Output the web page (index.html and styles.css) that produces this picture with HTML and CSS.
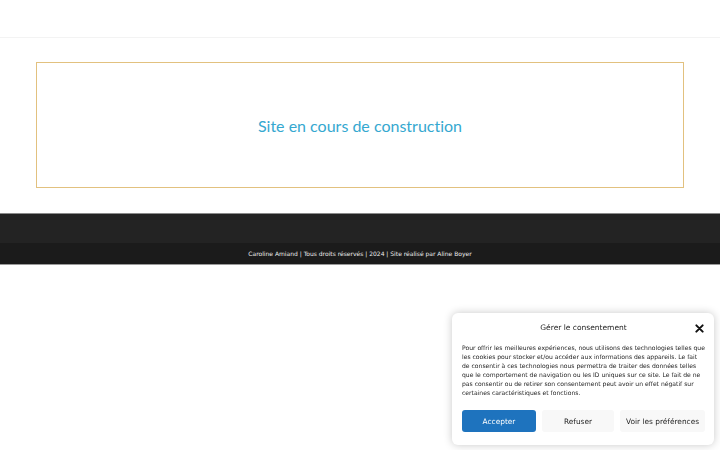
FILE: index.html
```html
<!DOCTYPE html>
<html lang="fr">
<head>
<meta charset="utf-8">
<title>Caroline Amiand</title>
<link rel="stylesheet" href="styles.css">
</head>
<body>
<header class="site-header"></header>
<main class="content">
  <section class="notice">
    <h1 class="notice-title">Site en cours de construction</h1>
  </section>
</main>
<footer class="site-footer">
  <div class="footer-widgets"></div>
  <div class="footer-bottom">Caroline Amiand | Tous droits réservés | 2024 | Site réalisé par Aline Boyer</div>
</footer>
<div class="consent">
  <div class="consent-head">
    <div class="consent-title">Gérer le consentement</div>
    <span class="consent-close">
      <svg width="9" height="9" viewBox="0 0 10 10"><path d="M1.5 1.5 L8.5 8.5 M8.5 1.5 L1.5 8.5" stroke="#111" stroke-width="2.2" stroke-linecap="round"/></svg>
    </span>
  </div>
  <p class="consent-text">Pour offrir les meilleures expériences, nous utilisons des technologies telles que les cookies pour stocker et/ou accéder aux informations des appareils. Le fait de consentir à ces technologies nous permettra de traiter des données telles que le comportement de navigation ou les ID uniques sur ce site. Le fait de ne pas consentir ou de retirer son consentement peut avoir un effet négatif sur certaines caractéristiques et fonctions.</p>
  <div class="consent-buttons">
    <button class="btn btn-accept">Accepter</button>
    <button class="btn btn-deny">Refuser</button>
    <button class="btn btn-prefs">Voir les préférences</button>
  </div>
</div>
</body>
</html>
```
FILE: styles.css
```css
html, body {
  margin: 0;
  padding: 0;
  background: #ffffff;
  font-family: "DejaVu Sans", sans-serif;
}
.site-header {
  height: 37px;
  border-bottom: 1px solid #f3f3f3;
}
.content {
  padding: 24px 36px 25px;
}
.notice {
  height: 124px;
  border: 1px solid #e2c17f;
  display: flex;
  align-items: center;
  justify-content: center;
}
.notice-title {
  margin: 0;
  font-family: "Lato", "Open Sans", sans-serif;
  font-weight: 400;
  font-size: 16px;
  font-variant-ligatures: none;
  color: #35a8d0;
}
.site-footer {
  border-top: 1px solid #8a8a8a;
}
.footer-widgets {
  height: 29px;
  background: #232323;
}
.footer-bottom {
  height: 21px;
  background: #1b1b1b;
  color: #ececec;
  font-size: 6px;
  line-height: 21px;
  text-align: center;
  border-bottom: 1px solid #9a9a9a;
}
.consent {
  position: fixed;
  left: 452px;
  top: 313px;
  width: 243px;
  padding: 8px 9px 13px 10px;
  background: #ffffff;
  border-radius: 6px;
  box-shadow: 0 0 8px rgba(0,0,0,0.22);
  color: #222;
}
.consent-head {
  position: relative;
  height: 12px;
  margin-top: 1px;
}
.consent-title {
  text-align: center;
  font-size: 7.5px;
  line-height: 12px;
  color: #222;
}
.consent-close {
  position: absolute;
  right: 1px;
  top: 2px;
  line-height: 0;
}
.consent-text {
  margin: 10px 0 0;
  font-size: 6.07px;
  line-height: 8.9px;
  color: #1e1e1e;
}
.consent-buttons {
  display: flex;
  gap: 6px;
  margin-top: 13px;
}
.btn {
  height: 22px;
  border: 0;
  border-radius: 3px;
  font-family: "DejaVu Sans", sans-serif;
  font-size: 7.4px;
  padding: 0;
  cursor: pointer;
}
.btn-accept {
  width: 74px;
  background: #1e73be;
  color: #ffffff;
}
.btn-deny {
  width: 72px;
  background: #f8f8f8;
  color: #222;
}
.btn-prefs {
  width: 85px;
  background: #f8f8f8;
  color: #222;
}
```
